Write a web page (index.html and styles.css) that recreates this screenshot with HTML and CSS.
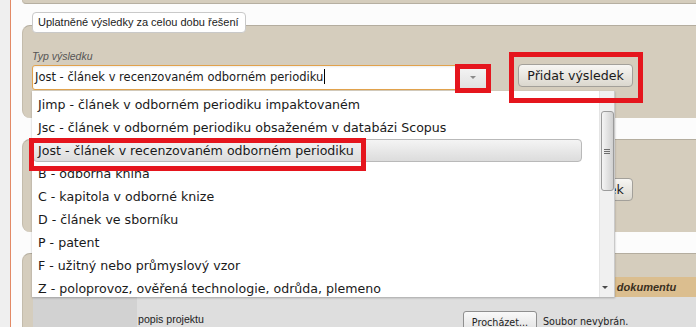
FILE: index.html
```html
<!DOCTYPE html>
<html lang="cs">
<head>
    <meta charset="UTF-8">
    <meta name="viewport" content="width=device-width, initial-scale=1.0">
    <title>Uplatněné výsledky</title>
    <link rel="stylesheet" href="styles.css">
</head>
<body>

<div class="layout">
    <div class="side"></div>
    <div class="content">
        <div class="panel-end"></div>

        <!-- Výsledky za celou dobu -->
        <div class="section">
            <div class="legend">Uplatněné výsledky za celou dobu řešení</div>
            <div class="panel">
                <div class="field-label">Typ výsledku</div>
                <div class="field-row">
                    <div class="select">
                        <div class="select-value">Jost - článek v recenzovaném odborném periodiku<span class="caret"></span></div>
                        <div class="select-arrow"></div>
                    </div>
                    <button class="btn">Přidat výsledek</button>
                </div>
            </div>
        </div>

        <!-- Další blok (zakrytý seznamem) -->
        <div class="section">
            <div class="legend legend-empty"></div>
            <div class="panel">
                <div class="field-label"></div>
                <div class="field-row">
                    <div class="select">
                        <div class="select-value"></div>
                        <div class="select-arrow"></div>
                    </div>
                    <button class="btn">Přidat výsledek</button>
                </div>
            </div>
        </div>

        <!-- Dokumenty -->
        <div class="section">
            <div class="legend legend-empty"></div>
            <div class="panel panel-docs">
                <div class="doc-head">
                    <div class="col col-1"></div>
                    <div class="col col-2"></div>
                    <div class="col col-3"></div>
                    <div class="col col-4">Název dokumentu</div>
                </div>
                <div class="doc-row">
                    <div class="col col-1"></div>
                    <div class="col col-2 doc-desc">popis projektu</div>
                    <div class="col doc-file">
                        <button class="file-btn">Procházet...</button>
                        <span class="file-name">Soubor nevybrán.</span>
                    </div>
                </div>
            </div>
        </div>
    </div>
</div>

<!-- Otevřený seznam typů výsledku -->
<div class="dropdown">
    <ul class="options">
        <li>Jimp - článek v odborném periodiku impaktovaném</li>
        <li>Jsc - článek v odborném periodiku obsaženém v databázi Scopus</li>
        <li class="selected">Jost - článek v recenzovaném odborném periodiku</li>
        <li>B - odborná kniha</li>
        <li>C - kapitola v odborné knize</li>
        <li>D - článek ve sborníku</li>
        <li>P - patent</li>
        <li>F - užitný nebo průmyslový vzor</li>
        <li>Z - poloprovoz, ověřená technologie, odrůda, plemeno</li>
    </ul>
    <div class="scrollbar">
        <div class="thumb"><span class="grip"></span></div>
        <span class="arrow-down"></span>
    </div>
</div>

<!-- Zvýraznění -->
<div class="mark mark-arrow"></div>
<div class="mark mark-button"></div>
<div class="mark mark-option"></div>

</body>
</html>
```

FILE: styles.css
```css
body {
    margin: 0;
    width: 696px;
    height: 327px;
    overflow: hidden;
    position: relative;
    font-family: "Liberation Sans", Arial, sans-serif;
    font-size: 11px;
    color: #222;
    background-color: #fcfcfc;
}
.layout {
    display: flex;
    height: 327px;
}
.side {
    width: 10px;
    flex: none;
    background-color: #efefef;
    border-right: 1px solid #e38a66;
}
.content {
    flex: 1;
    min-width: 0;
    padding-left: 11px;
}
.panel-end {
    height: 3px;
    background-color: #d5cdbd;
    border-bottom: 1px solid #b6afa1;
    border-left: 1px solid #c4bcac;
    border-bottom-left-radius: 6px;
}
.section {
    margin-top: 8px;
}
.legend {
    position: relative;
    z-index: 1;
    width: max-content;
    height: 21px;
    box-sizing: border-box;
    margin-left: 10px;
    padding: 0 6px 0 5px;
    line-height: 19px;
    background-color: #fff;
    border: 1px solid #c9c9c9;
    border-radius: 4px;
}
.legend-empty {
    width: 200px;
}
.panel {
    margin-top: -8px;
    height: 93px;
    box-sizing: border-box;
    padding: 23px 0 0 9px;
    background-color: #d5cdbd;
    border-top: 1px solid #b4ad9f;
    border-left: 1px solid #c4bcac;
    border-radius: 8px 0 0 8px;
}
.field-label {
    height: 14px;
    line-height: 14px;
    font-size: 10.5px;
    font-style: italic;
    color: #555;
}
.field-row {
    display: flex;
    align-items: flex-start;
    margin-top: 1px;
}
.select {
    display: flex;
    width: 458px;
    height: 25px;
    box-sizing: border-box;
    margin-top: 1px;
    background-color: #fff;
    border: 1px solid #e1a24c;
    border-radius: 3px;
    box-shadow: inset 0 1px 2px rgba(0, 0, 0, 0.08);
}
.select-value {
    flex: 1;
    padding-left: 2px;
    font-family: "DejaVu Sans", sans-serif;
    font-size: 11.5px;
    line-height: 23px;
    color: #1a1a1a;
    white-space: nowrap;
}
.caret {
    display: inline-block;
    width: 1px;
    height: 15px;
    margin-left: 1px;
    vertical-align: -3px;
    background-color: #000;
}
.select-arrow {
    display: flex;
    align-items: center;
    justify-content: center;
    width: 32px;
    border-left: 1px solid #dcdcdc;
    background: linear-gradient(#f5f5f5, #e0e0e0);
}
.select-arrow::after {
    content: "";
    border-left: 3px solid transparent;
    border-right: 3px solid transparent;
    border-top: 3px solid #8a8a8a;
}
.btn {
    width: 115px;
    height: 23px;
    margin-left: 28px;
    padding: 0;
    font-family: "DejaVu Sans", sans-serif;
    font-size: 12.6px;
    color: #1a1a1a;
    background: linear-gradient(#f7f6f3, #dbd7ce);
    border: 1px solid #a3a09a;
    border-radius: 4px;
}
/* dokumenty */
.panel-docs {
    height: auto;
    padding: 23px 0 0 10px;
}
.doc-head {
    display: flex;
    height: 20px;
    line-height: 20px;
    background-color: #dbbe8f;
    font-weight: bold;
    font-style: italic;
    color: #3a2f1e;
}
.col {
    flex: none;
    box-sizing: border-box;
}
.col-1 { width: 104px; }
.col-2 { width: 318px; }
.col-3 { width: 92px; }
.col-4 { flex: 1; padding-left: 35px; }
.doc-head .col-1,
.doc-head .col-2,
.doc-head .col-3 {
    border-right: 1px solid #cdb083;
}
.doc-row {
    display: flex;
    height: 40px;
    background-color: #dedede;
}
.doc-row .col-1 {
    background-color: #d2d2d2;
}
.doc-desc {
    padding: 15px 0 0 1px;
    font-size: 10.6px;
    line-height: 14px;
}
.doc-file {
    flex: 1;
    display: flex;
    align-items: flex-start;
    padding: 14px 0 0 8px;
}
.file-btn {
    width: 74px;
    height: 22px;
    padding: 0;
    font-family: "DejaVu Sans", sans-serif;
    font-size: 9.6px;
    color: #222;
    background: linear-gradient(#f9f9f9, #e0e0e0);
    border: 1px solid #8f8f8f;
    border-radius: 3px;
}
.file-name {
    margin-left: 6px;
    font-family: "DejaVu Sans", sans-serif;
    font-size: 9.6px;
    line-height: 22px;
}
/* rozbalený seznam */
.dropdown {
    position: absolute;
    z-index: 2;
    left: 32px;
    top: 91px;
    width: 583px;
    height: 206px;
    display: flex;
    overflow: hidden;
    background-color: #fff;
    box-shadow: 0 1px 2px rgba(0, 0, 0, 0.25);
}
.options {
    flex: 1;
    margin: 0;
    padding: 2px 17px 0 1px;
    list-style: none;
    font-family: "DejaVu Sans", sans-serif;
    font-size: 12.6px;
    color: #1a1a1a;
}
.options li {
    height: 23px;
    box-sizing: border-box;
    padding-left: 4px;
    line-height: 21px;
    white-space: nowrap;
    border: 1px solid transparent;
}
.options li.selected {
    background: linear-gradient(#f4f4f4, #dcdcdc);
    border-color: #b9b9b9;
    border-radius: 4px;
}
.scrollbar {
    width: 14px;
    flex: none;
    display: flex;
    flex-direction: column;
    align-items: center;
    background-color: #f0f0f0;
    border-left: 1px solid #e4e4e4;
    border-right: 1px solid #c9c9c9;
}
.thumb {
    display: flex;
    align-items: center;
    justify-content: center;
    width: 13px;
    height: 80px;
    box-sizing: border-box;
    margin-top: 20px;
    background: linear-gradient(to right, #f5f5f5, #d0d0d0);
    border: 1px solid #9b9b9b;
    border-radius: 3px;
}
.grip {
    width: 6px;
    height: 5px;
    background: repeating-linear-gradient(#6d6d6d 0 1px, transparent 1px 2px);
}
.arrow-down {
    margin-top: auto;
    margin-bottom: 8px;
    margin-right: 4px;
    border-left: 3px solid transparent;
    border-right: 3px solid transparent;
    border-top: 3px solid #4a4a4a;
}
/* červené značky */
.mark {
    position: absolute;
    z-index: 3;
    box-sizing: border-box;
    border: 5px solid #e5151d;
}
.mark-arrow {
    left: 455px;
    top: 64px;
    width: 36px;
    height: 29px;
}
.mark-button {
    left: 509px;
    top: 52px;
    width: 134px;
    height: 51px;
}
.mark-option {
    left: 29px;
    top: 138px;
    width: 337px;
    height: 33px;
}
```
